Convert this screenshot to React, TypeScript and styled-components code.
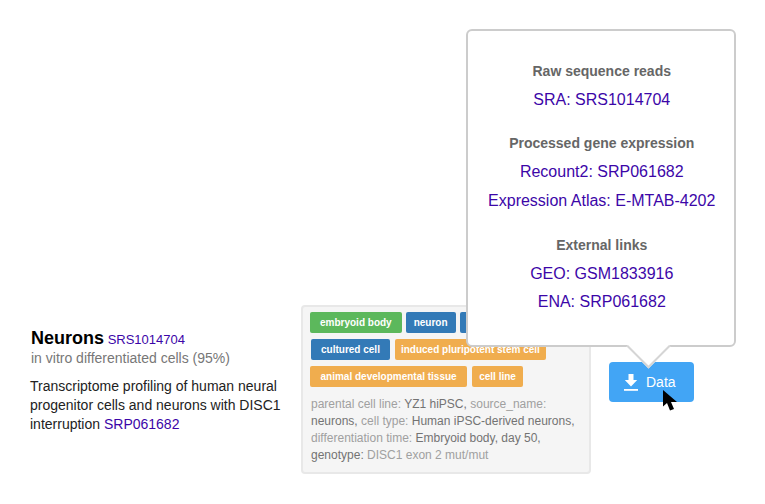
import styled, { createGlobalStyle } from "styled-components";

const GlobalStyle = createGlobalStyle`
  html, body {
    margin: 0;
    background: #fff;
    font-family: "Liberation Sans", Arial, sans-serif;
  }
`;

const tagColors = {
  green: "#5cb85c",
  blue: "#337ab7",
  orange: "#f0ad4e",
};

export default function App() {
  return (
    <>
      <GlobalStyle />
      <Page>
        <Summary>
          <Heading>
            <Name>Neurons</Name> <SmallLink href="#">SRS1014704</SmallLink>
          </Heading>
          <Subtitle>in vitro differentiated cells (95%)</Subtitle>
          <Description>
            Transcriptome profiling of human neural progenitor cells and neurons with DISC1 interruption{" "}
            <Link href="#">SRP061682</Link>
          </Description>
        </Summary>

        <Well>
          <Tags $gap={4}>
            <Tag $color="green">embryoid body</Tag>
            <Tag $color="blue" $pad={8}>neuron</Tag>
            <Tag $color="blue">neural cell</Tag>
          </Tags>
          <Tags $indent={1}>
            <Tag $color="blue">cultured cell</Tag>
            <Tag $color="orange" $pad={6}>induced pluripotent stem cell</Tag>
          </Tags>
          <Tags>
            <Tag $color="orange" $pad={10.5}>animal developmental tissue</Tag>
            <Tag $color="orange" $pad={7}>cell line</Tag>
          </Tags>
          <Meta>
            <Key>parental cell line:</Key> YZ1 hiPSC, <Key>source_name:</Key> neurons, <Key>cell type:</Key> Human
            iPSC-derived neurons, <Key>differentiation time:</Key> Embryoid body, day 50, genotype:{" "}
            <Key>DISC1 exon 2 mut/mut</Key>
          </Meta>
        </Well>

        <DataAnchor>
          <DataButton>
            <svg width="16" height="18" viewBox="0 0 16 18" fill="#fff">
              <path d="M5.5 1h5v6h3.7L8 13.4 1.8 7h3.7z" />
              <rect x="1" y="16" width="14" height="1.8" />
            </svg>
            Data
          </DataButton>
          <Cursor width="16" height="22" viewBox="0 0 16 22">
            <path d="M1 0v16.5l4-3.6 3 7.6 4-1.6-3-7H15z" fill="#000" />
          </Cursor>
          <Popover>
            <SectionTitle>Raw sequence reads</SectionTitle>
            <PopLink href="#">SRA: SRS1014704</PopLink>
            <SectionTitle>Processed gene expression</SectionTitle>
            <PopLink href="#">Recount2: SRP061682</PopLink>
            <PopLink href="#">Expression Atlas: E-MTAB-4202</PopLink>
            <SectionTitle>External links</SectionTitle>
            <PopLink href="#">GEO: GSM1833916</PopLink>
            <PopLink href="#">ENA: SRP061682</PopLink>
            <Arrow />
          </Popover>
        </DataAnchor>
      </Page>
    </>
  );
}

const Page = styled.div`
  width: 765px;
  height: 504px;
  box-sizing: border-box;
  padding: 305px 0 0 30px;
  display: flex;
  align-items: flex-start;
  overflow: hidden;
`;

const Summary = styled.div`
  width: 271px;
  padding-top: 23px;
`;

const Heading = styled.div`
  font-size: 13px;
  line-height: 20px;
  padding-left: 1px;
`;

const Name = styled.span`
  font-size: 18px;
  font-weight: bold;
  color: #000;
`;

const Link = styled.a`
  color: #3c06a8;
  text-decoration: none;
`;

const SmallLink = styled(Link)`
  font-size: 13px;
`;

const Subtitle = styled.div`
  margin-top: -1px;
  font-size: 14px;
  line-height: 18px;
  color: #777;
  padding-left: 1px;
`;

const Description = styled.div`
  margin-top: 10px;
  font-size: 14px;
  line-height: 19px;
  color: #222;
`;

const Well = styled.div`
  width: 290px;
  height: 169px;
  box-sizing: border-box;
  padding: 5px 7px;
  background: #f5f5f5;
  border: 2px solid #e8e8e8;
  border-radius: 4px;
`;

const Tags = styled.div<{ $indent?: number; $gap?: number }>`
  display: flex;
  gap: ${(p) => p.$gap ?? 5}px;
  margin-bottom: 6px;
  padding-left: ${(p) => p.$indent ?? 0}px;
`;

const Tag = styled.span<{ $color: keyof typeof tagColors; $pad?: number }>`
  height: 21px;
  line-height: 21px;
  padding: 0 ${(p) => p.$pad ?? 10}px;
  border-radius: 2px;
  background: ${(p) => tagColors[p.$color]};
  color: #fff;
  font-size: 10px;
  font-weight: bold;
  white-space: nowrap;
`;

const Meta = styled.div`
  margin: 9px 0 0 1px;
  font-size: 12px;
  line-height: 17px;
  color: #737373;
`;

const Key = styled.span`
  color: #a0a0a0;
`;

const DataAnchor = styled.div`
  position: relative;
  margin: 57px 0 0 18px;
`;

const DataButton = styled.div`
  width: 85px;
  height: 40px;
  box-sizing: border-box;
  padding-left: 14px;
  display: flex;
  align-items: center;
  gap: 7px;
  border-radius: 4px;
  background: #42a5f5;
  color: #fff;
  font-size: 14px;
`;

const Cursor = styled.svg`
  position: absolute;
  left: 53px;
  top: 28px;
`;

const Popover = styled.div`
  position: absolute;
  left: -143px;
  bottom: 55px;
  width: 270px;
  height: 318px;
  box-sizing: border-box;
  padding: 11.4px 0 0 1.5px;
  display: flex;
  flex-direction: column;
  align-items: center;
  background: #fff;
  border: 2px solid #ccc;
  border-radius: 6px;
`;

const SectionTitle = styled.div`
  margin: 17.6px 0 4px;
  font-size: 14px;
  font-weight: bold;
  line-height: 22px;
  color: #666;
`;

const PopLink = styled(Link)`
  font-size: 16px;
  line-height: 28.8px;
`;

const Arrow = styled.div`
  position: absolute;
  left: 165px;
  bottom: -17px;
  width: 31px;
  height: 31px;
  box-sizing: border-box;
  transform: rotate(45deg);
  background: #fff;
  border-right: 2px solid #d5d5d5;
  border-bottom: 2px solid #d5d5d5;
`;
